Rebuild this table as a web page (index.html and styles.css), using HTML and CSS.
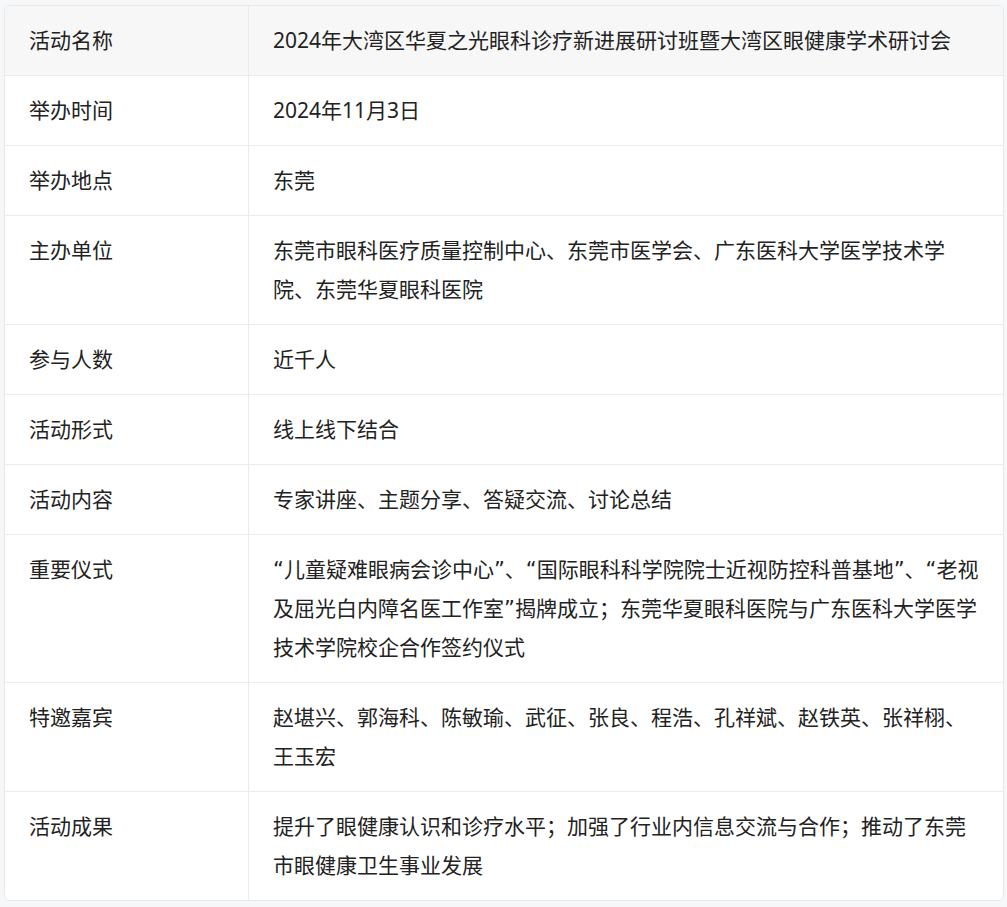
FILE: index.html
```html
<!DOCTYPE html>
<html lang="zh-CN">
<head>
<meta charset="utf-8">
<title>活动信息</title>
<link rel="stylesheet" href="styles.css">
</head>
<body>
<div class="card">
  <div class="cell label head">活动名称</div>
  <div class="cell value head">2024年大湾区华夏之光眼科诊疗新进展研讨班暨大湾区眼健康学术研讨会</div>

  <div class="cell label">举办时间</div>
  <div class="cell value">2024年11月3日</div>

  <div class="cell label">举办地点</div>
  <div class="cell value">东莞</div>

  <div class="cell label">主办单位</div>
  <div class="cell value">东莞市眼科医疗质量控制中心、东莞市医学会、广东医科大学医学技术学院、东莞华夏眼科医院</div>

  <div class="cell label">参与人数</div>
  <div class="cell value">近千人</div>

  <div class="cell label">活动形式</div>
  <div class="cell value">线上线下结合</div>

  <div class="cell label">活动内容</div>
  <div class="cell value">专家讲座、主题分享、答疑交流、讨论总结</div>

  <div class="cell label">重要仪式</div>
  <div class="cell value"><span class="qt">“</span>儿童疑难眼病会诊中心<span class="qt">”</span>、<span class="qt">“</span>国际眼科科学院院士近视防控科普基地<span class="qt">”</span>、<span class="qt">“</span>老视及屈光白内障名医工作室<span class="qt">”</span>揭牌成立；东莞华夏眼科医院与广东医科大学医学技术学院校企合作签约仪式</div>

  <div class="cell label">特邀嘉宾</div>
  <div class="cell value">赵堪兴、郭海科、陈敏瑜、武征、张良、程浩、孔祥斌、赵铁英、张祥栩、王玉宏</div>

  <div class="cell label last">活动成果</div>
  <div class="cell value last">提升了眼健康认识和诊疗水平；加强了行业内信息交流与合作；推动了东莞市眼健康卫生事业发展</div>
</div>
</body>
</html>
```

FILE: styles.css
```css
html, body {
  margin: 0;
  padding: 0;
  background: #f6f7f9;
}

body {
  padding: 5px 3px 6px 4px;
  font-family: "Noto Sans", "Noto Sans CJK SC", sans-serif;
  font-size: 21px;
  line-height: 39px;
  color: #222;
}

.card {
  width: 998px;
  display: grid;
  grid-template-columns: 244px 1fr;
  background: #fff;
  border: 1px solid #e9e9e9;
  border-radius: 6px;
  overflow: hidden;
}

.cell {
  padding: 15px 24px;
  border-bottom: 1px solid #ebebeb;
  word-break: break-all;
}

.cell.last {
  border-bottom: none;
}

.label {
  border-right: 1px solid #ebebeb;
}

.head {
  background: #f7f7f7;
}

.qt {
  font-family: "DejaVu Sans", sans-serif;
  line-height: 1;
}
```
